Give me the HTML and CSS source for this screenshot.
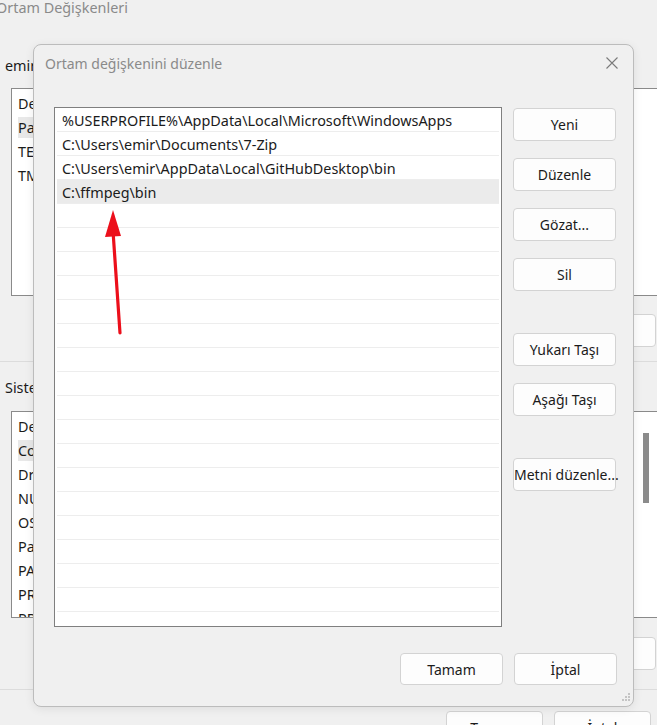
FILE: index.html
```html
<!DOCTYPE html>
<html lang="tr">
<head>
    <meta charset="UTF-8">
    <meta name="viewport" content="width=device-width, initial-scale=1.0">
    <title>Ortam Değişkenleri</title>
    <link rel="stylesheet" href="styles.css">
</head>
<body>
    <!-- Arka plandaki ana pencere -->
    <div class="window main-window">
        <div class="main-title">Ortam Değişkenleri</div>

        <div class="group-label first">emir için kullanıcı değişkenleri</div>
        <div class="var-list user-list">
            <div class="var-row">Değişken</div>
            <div class="var-row"><span class="picked">Path</span></div>
            <div class="var-row">TEMP</div>
            <div class="var-row">TMP</div>
        </div>
        <div class="main-buttons">
            <button class="btn">Yeni...</button>
            <button class="btn">Düzenle...</button>
            <button class="btn">Sil</button>
        </div>

        <div class="divider"></div>

        <div class="group-label">Sistem değişkenleri</div>
        <div class="var-list system-list">
            <div class="var-row">Değişken</div>
            <div class="var-row"><span class="picked">ComSpec</span></div>
            <div class="var-row">DriverData</div>
            <div class="var-row">NUMBER_OF_PROCESSORS</div>
            <div class="var-row">OS</div>
            <div class="var-row">Path</div>
            <div class="var-row">PATHEXT</div>
            <div class="var-row">PROCESSOR_ARCHITECTURE</div>
            <div class="var-row">PROCESSOR_IDENTIFIER</div>
            <div class="scroll-thumb"></div>
        </div>
        <div class="main-buttons low">
            <button class="btn">Yeni...</button>
            <button class="btn">Düzenle...</button>
            <button class="btn">Sil</button>
        </div>

        <div class="divider bottom"></div>

        <div class="main-footer">
            <button class="btn">Tamam</button>
            <button class="btn">İptal</button>
        </div>
    </div>

    <!-- Düzenleme penceresi -->
    <div class="window dialog">
        <div class="dialog-title">
            <span>Ortam değişkenini düzenle</span>
            <svg class="close" width="12" height="12" viewBox="0 0 12 12">
                <path d="M0.5 0.5 L11.5 11.5 M11.5 0.5 L0.5 11.5" stroke="#7a7a7a" stroke-width="1.1" fill="none"/>
            </svg>
        </div>

        <div class="dialog-body">
            <div class="path-list">
                <div class="path-row">%USERPROFILE%\AppData\Local\Microsoft\WindowsApps</div>
                <div class="path-row">C:\Users\emir\Documents\7-Zip</div>
                <div class="path-row">C:\Users\emir\AppData\Local\GitHubDesktop\bin</div>
                <div class="path-row selected">C:\ffmpeg\bin</div>
                <div class="path-row"></div>
                <div class="path-row"></div>
                <div class="path-row"></div>
                <div class="path-row"></div>
                <div class="path-row"></div>
                <div class="path-row"></div>
                <div class="path-row"></div>
                <div class="path-row"></div>
                <div class="path-row"></div>
                <div class="path-row"></div>
                <div class="path-row"></div>
                <div class="path-row"></div>
                <div class="path-row"></div>
                <div class="path-row"></div>
                <div class="path-row"></div>
                <div class="path-row"></div>
                <div class="path-row"></div>
                <div class="path-row"></div>
            </div>

            <div class="side-buttons">
                <button class="btn">Yeni</button>
                <button class="btn">Düzenle</button>
                <button class="btn">Gözat...</button>
                <button class="btn">Sil</button>
                <button class="btn spaced">Yukarı Taşı</button>
                <button class="btn">Aşağı Taşı</button>
                <button class="btn spaced">Metni düzenle...</button>
            </div>
        </div>

        <div class="dialog-footer">
            <button class="btn">Tamam</button>
            <button class="btn">İptal</button>
        </div>

        <svg class="grip" width="10" height="10" viewBox="0 0 10 10">
            <rect x="8" y="0" width="2" height="2" fill="#c4c4c4"/>
            <rect x="5" y="3" width="2" height="2" fill="#c4c4c4"/>
            <rect x="8" y="3" width="2" height="2" fill="#c4c4c4"/>
            <rect x="2" y="6" width="2" height="2" fill="#c4c4c4"/>
            <rect x="5" y="6" width="2" height="2" fill="#c4c4c4"/>
            <rect x="8" y="6" width="2" height="2" fill="#c4c4c4"/>
        </svg>
    </div>

    <!-- İşaret oku -->
    <svg class="arrow" width="40" height="140" viewBox="0 0 40 140">
        <path d="M29 128 L22 26" stroke="#ec0f1b" stroke-width="3.2" stroke-linecap="round" fill="none"/>
        <path d="M22 5 L14 32 L30 31 Z" fill="#ec0f1b"/>
    </svg>
</body>
</html>
```

FILE: styles.css
```css
body {
    margin: 0;
    width: 657px;
    height: 725px;
    overflow: hidden;
    position: relative;
    background-color: #f0f0f0;
    font-family: "Noto Sans", "Open Sans", sans-serif;
    font-size: 14px;
    color: #1b1b1b;
}

.window {
    position: absolute;
    box-sizing: border-box;
    background-color: #f0f0f0;
}

/* ana pencere */
.main-window {
    left: 0;
    top: 0;
    width: 720px;
    height: 760px;
    display: flex;
    flex-direction: column;
}

.main-title {
    margin-left: -4px;
    height: 18px;
    line-height: 16px;
    font-size: 14.4px;
    color: #8a8a8a;
}

.group-label {
    margin: 16px 0 0 5px;
    height: 20px;
    line-height: 20px;
    font-size: 14.4px;
}

.group-label.first {
    margin-top: 38px;
    margin-bottom: 12px;
}

.var-list {
    position: relative;
    margin-left: 11px;
    box-sizing: border-box;
    background-color: #fff;
    border: 1px solid #8a8a8a;
    border-right: none;
    padding-top: 3px;
    overflow: hidden;
}

.user-list {
    height: 208px;
}

.system-list {
    height: 207px;
    margin-top: 13px;
}

.var-row {
    height: 24px;
    line-height: 24px;
    padding-left: 6px;
    font-size: 14.4px;
    white-space: nowrap;
}

.picked {
    background-color: #e8e8e8;
    padding: 1px 0;
}

.scroll-thumb {
    position: absolute;
    left: 631px;
    top: 21px;
    width: 6px;
    height: 70px;
    background-color: #8b8b8b;
}

.main-buttons {
    display: flex;
    justify-content: flex-end;
    gap: 11px;
    margin-top: 18px;
    padding-right: 64px;
}

.main-buttons .btn {
    width: 97px;
}

.main-buttons.low {
    margin-top: 19px;
}

.divider {
    margin-top: 14px;
    height: 1px;
    background-color: #dcdcdc;
}

.divider.bottom {
    margin-top: 19px;
}

.main-footer {
    display: flex;
    gap: 11px;
    margin: 21px 0 0 446px;
}

.main-footer .btn {
    width: 97px;
}

.btn {
    box-sizing: border-box;
    height: 33px;
    background-color: #fdfdfd;
    border: 1px solid #d3d3d3;
    border-radius: 4px;
    font-family: inherit;
    font-size: 14px;
    color: #1b1b1b;
    padding: 0;
    white-space: nowrap;
}

/* düzenleme penceresi */
.dialog {
    left: 33px;
    top: 44px;
    width: 601px;
    height: 663px;
    border: 1px solid #bcbcbc;
    border-radius: 8px;
    box-shadow: 0 2px 10px rgba(0, 0, 0, 0.08);
    display: flex;
    flex-direction: column;
}

.dialog-title {
    height: 36px;
    display: flex;
    align-items: center;
    justify-content: space-between;
    padding: 0 15px 0 11px;
    font-size: 14px;
    color: #8a8a8a;
}

.close {
    margin-top: 0;
}

.dialog-body {
    display: flex;
    gap: 11px;
    padding: 26px 17px 0 20px;
}

.path-list {
    width: 448px;
    height: 520px;
    box-sizing: border-box;
    background-color: #fff;
    border: 1px solid #7f7f7f;
    overflow: hidden;
}

.path-row {
    box-sizing: border-box;
    height: 24px;
    line-height: 20px;
    margin: 0 2px;
    padding: 3px 0 0 5px;
    border-bottom: 1px solid #ededed;
    font-size: 14.4px;
    white-space: nowrap;
}

.path-row.selected {
    background-color: #ebebeb;
}

.side-buttons {
    display: flex;
    flex-direction: column;
    gap: 17px;
    padding-top: 1px;
}

.side-buttons .btn {
    width: 103px;
}

.side-buttons .btn.spaced {
    margin-top: 25px;
}

.dialog-footer {
    display: flex;
    justify-content: flex-end;
    gap: 11px;
    padding: 26px 16px 0 0;
}

.dialog-footer .btn {
    width: 103px;
    height: 32px;
}

.grip {
    position: absolute;
    right: 3px;
    bottom: 3px;
}

.arrow {
    position: absolute;
    left: 91px;
    top: 205px;
}
```
